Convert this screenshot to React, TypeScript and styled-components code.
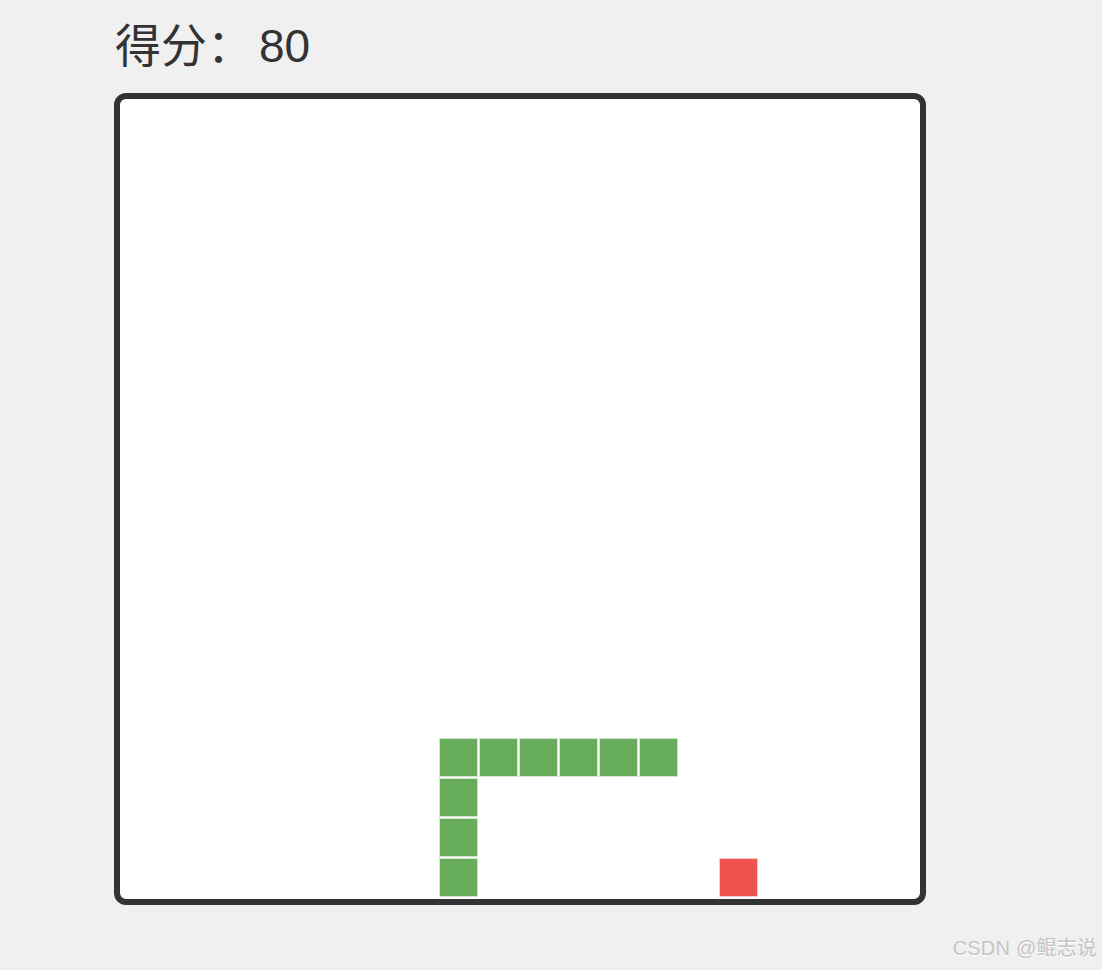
import React from 'react';
import styled, { createGlobalStyle } from 'styled-components';

const GlobalStyle = createGlobalStyle`
  html, body {
    margin: 0;
    padding: 0;
    background: #f0f0f0;
  }
  body {
    font-family: "Liberation Sans", "Noto Sans CJK SC", sans-serif;
  }
`;

const GRID = 20;
const CELL = 40;

const snake = [
  { x: 13, y: 16 },
  { x: 12, y: 16 },
  { x: 11, y: 16 },
  { x: 10, y: 16 },
  { x: 9, y: 16 },
  { x: 8, y: 16 },
  { x: 8, y: 17 },
  { x: 8, y: 18 },
  { x: 8, y: 19 },
];

const food = { x: 15, y: 19 };

const Page = styled.div`
  position: relative;
  width: 1102px;
  height: 970px;
  padding: 18px 0 0 114px;
  box-sizing: border-box;
`;

const Score = styled.div`
  font-size: 46px;
  line-height: 56px;
  color: #333;
  margin: 0 0 19px 1px;
`;

const Points = styled.span`
  margin-left: 6px;
`;

const Board = styled.div`
  display: grid;
  grid-template-columns: repeat(${GRID}, ${CELL}px);
  grid-template-rows: repeat(${GRID}, ${CELL}px);
  width: ${GRID * CELL}px;
  height: ${GRID * CELL}px;
  background: #fff;
  border: 6px solid #333;
  border-radius: 12px;
`;

const Cell = styled.div<{ $x: number; $y: number; $food?: boolean }>`
  grid-column: ${(p) => p.$x + 1};
  grid-row: ${(p) => p.$y + 1};
  margin: 0 3px 3px 0;
  background: ${(p) => (p.$food ? '#ee5350' : '#67ac5b')};
  box-shadow: 0 0 0 1px ${(p) => (p.$food ? 'rgba(238,83,80,0.3)' : 'rgba(103,172,91,0.3)')};
`;

const Watermark = styled.div`
  position: absolute;
  right: 5px;
  bottom: 9px;
  font-size: 20px;
  color: #c4c4c4;
  text-shadow: 0 1px 0 #fff;
  letter-spacing: 0.2px;
`;

export default function App() {
  return (
    <>
      <GlobalStyle />
      <Page>
        <Score>
          得分：<Points>80</Points>
        </Score>
        <Board>
          {snake.map((s, i) => (
            <Cell key={i} $x={s.x} $y={s.y} />
          ))}
          <Cell $x={food.x} $y={food.y} $food />
        </Board>
        <Watermark>CSDN @鲲志说</Watermark>
      </Page>
    </>
  );
}
